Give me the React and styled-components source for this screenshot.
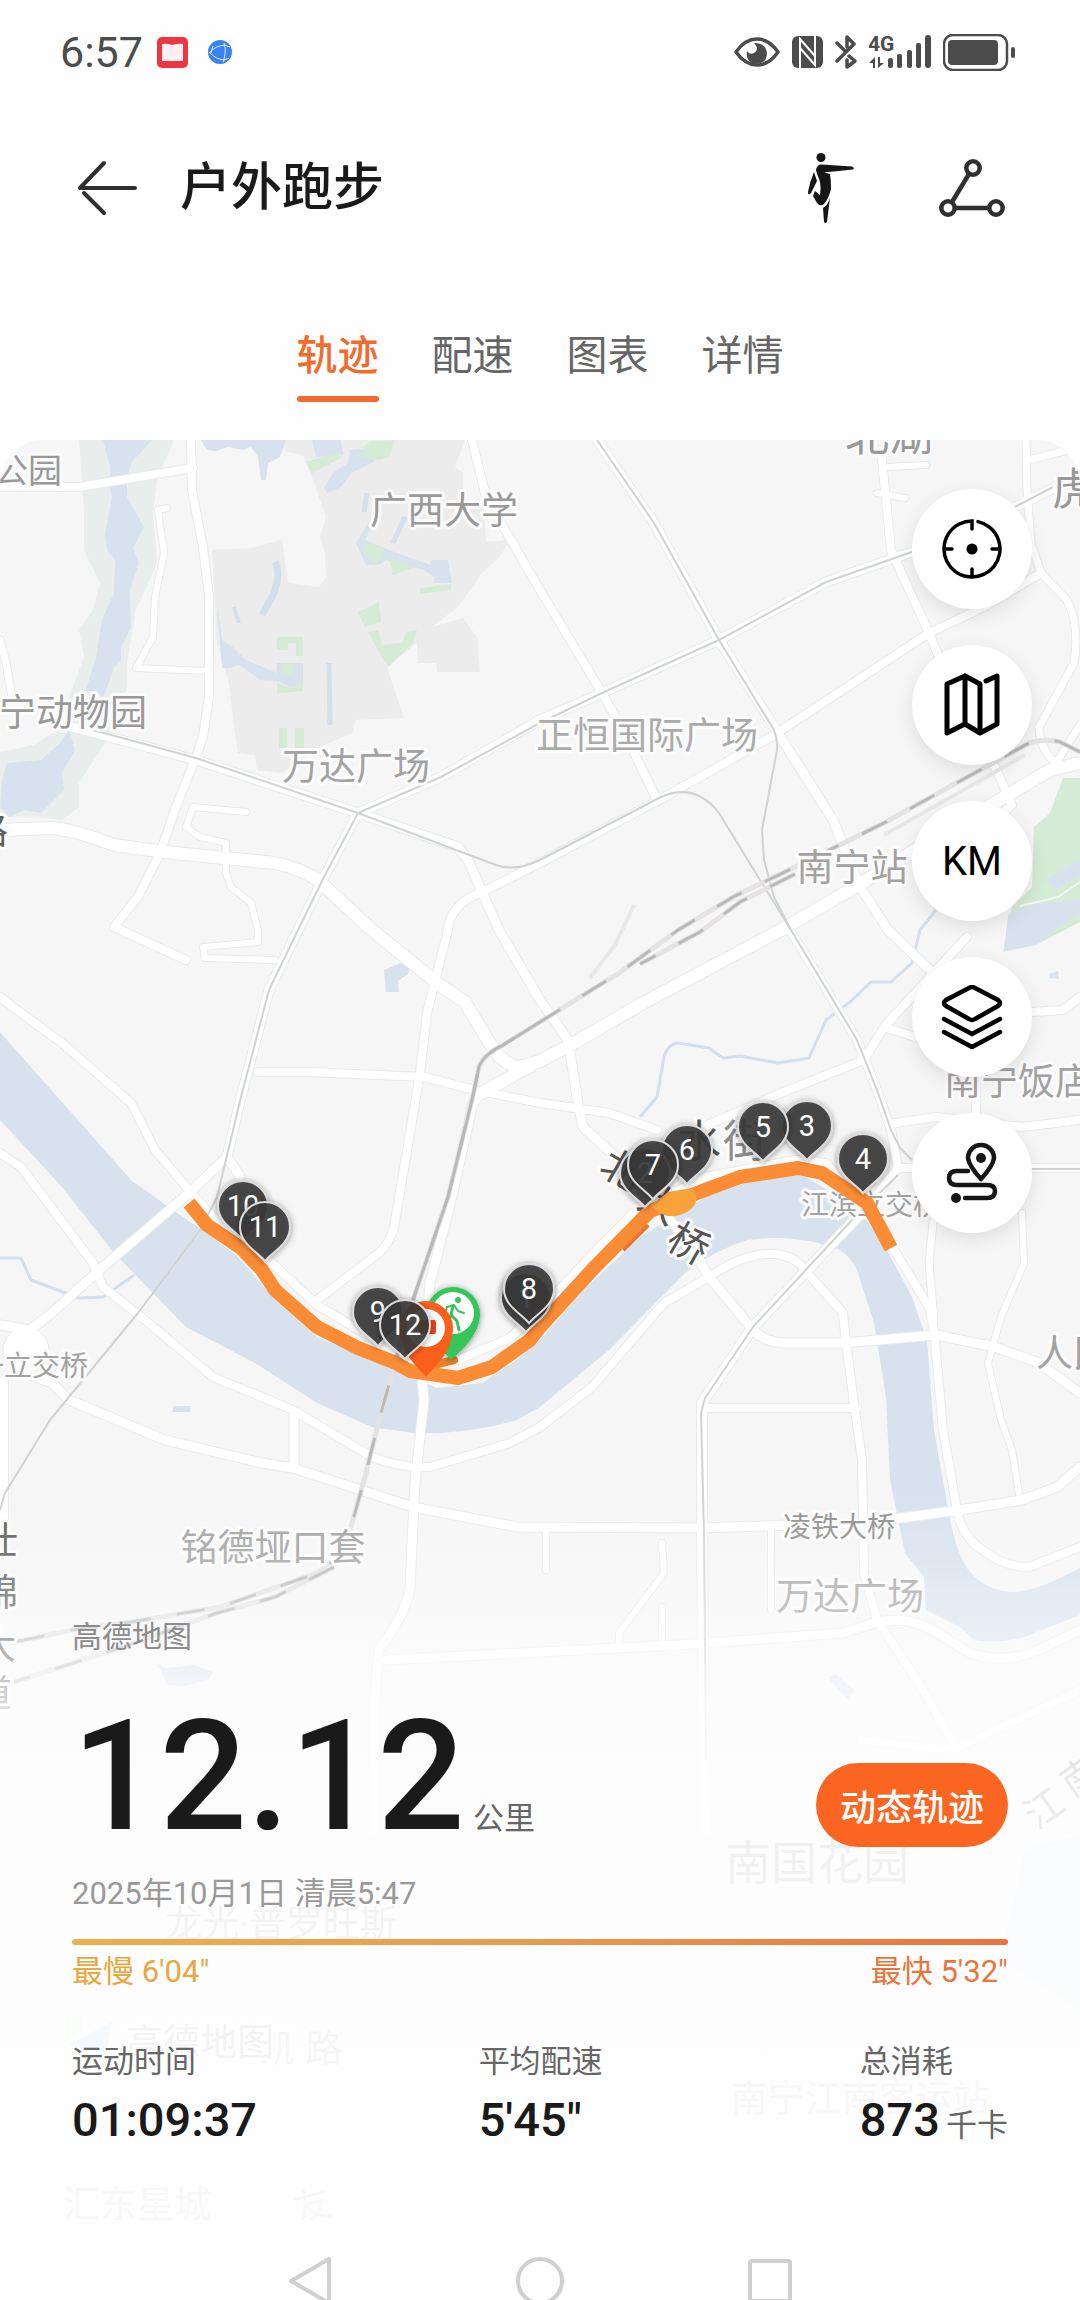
import React, { useState } from 'react'
import styled, { createGlobalStyle, css } from 'styled-components';

const GlobalStyle = createGlobalStyle`
  * {
    box-sizing: border-box;
  }
  body {
    margin: 0;
    background: #fefefe;
    font-family: Roboto, "Noto Sans CJK SC", sans-serif;
    color: #1a1a1a;
  }
  button {
    padding: 0;
    border: none;
    background: none;
    font-family: inherit;
    color: inherit;
    cursor: pointer;
  }
  svg {
    display: block;
    flex: none;
  }
`

const Screen = styled.div`
  display: flex;
  flex-direction: column;
  height: 100vh;
  overflow: hidden;
`;

const StatusBar = styled.div`
  display: flex;
  flex: none;
  justify-content: space-between;
  align-items: center;
  height: 104px;
  padding: 0 65px 0 60px;
  color: #4c4c4c;
`;

const StatusGroup = styled.div`
  display: flex;
  align-items: center;
  gap: ${({ $gap }) => $gap}px;
`;

const Clock = styled.span`
  font-size: 43px;
  line-height: 48px;
`;

const Header = styled.header`
  display: flex;
  flex: none;
  align-items: center;
  height: 168px;
  padding: 0 75px 0 76px;
`;

const IconButton = styled.button`
  display: flex;
  align-items: center;
`;

const Title = styled.h1`
  flex: 1;
  margin: 0 0 0 42px;
  font-size: 51px;
  line-height: 60px;
  font-weight: 500;
`;

const HeaderActions = styled.div`
  display: flex;
  align-items: center;
  gap: 84px;
`;

const Tabs = styled.nav`
  display: flex;
  flex: none;
  justify-content: center;
  gap: 53px;
  height: 168px;
  padding-top: 56px;
`;

const Tab = styled.button`
  position: relative;
  height: 74px;
  padding-bottom: 18px;
  font-size: 41px;
  line-height: 56px;
  color: #666;
  ${({ $active }) => $active && css`
    color: #f26b2c;
    font-weight: 500;
    &::after {
      content: "";
      position: absolute;
      left: 0;
      right: 0;
      bottom: 0;
      height: 6px;
      border-radius: 3px;
      background: #f26b2c;
    }
  `}
`;

const MapSection = styled.main`
  position: relative;
  display: flex;
  flex-direction: column;
  flex: none;
  padding: 49px 0 72px;
  border-radius: 44px 44px 0 0;
  overflow: hidden;
`;

const MapCanvas = styled.svg`
  position: absolute;
  top: 0;
  left: 0;
  width: 100%;
  height: 100%;
`;

const Tools = styled.div`
  position: relative;
  display: flex;
  flex-direction: column;
  align-self: flex-end;
  gap: 36px;
  margin-right: 48px;
`;

const ToolButton = styled.button`
  display: flex;
  justify-content: center;
  align-items: center;
  width: 120px;
  height: 120px;
  border-radius: 50%;
  background: white;
  box-shadow: 0 6px 18px rgba(0, 0, 0, 0.1);
  color: black;
  font-size: 40px;
`;

const Panel = styled.section`
  position: relative;
  margin-top: 384px;
  padding: 0 72px;
`;

const Credit = styled.div`
  font-size: 30px;
  line-height: 40px;
  color: #8c8c8c;
`;

const DistanceRow = styled.div`
  display: flex;
  justify-content: space-between;
  align-items: flex-end;
  margin-top: 50px;
`;

const Distance = styled.div`
  display: flex;
  align-items: baseline;
  gap: 8px;
  font-size: 154px;
  line-height: 140px;
  font-weight: 500;
`;

const Unit = styled.span`
  font-size: 31px;
  line-height: 40px;
  font-weight: 400;
  color: #666;
`;

const PlayButton = styled.button`
  height: 84px;
  padding: 0 24px;
  border-radius: 42px;
  background: #fb6522;
  color: white;
  font-size: 36px;
  font-weight: 500;
`;

const DateLine = styled.div`
  margin-top: 27px;
  font-size: 31px;
  line-height: 40px;
  color: #999;
`;

const PaceBar = styled.div`
  height: 6px;
  margin-top: 25px;
  border-radius: 3px;
  background: linear-gradient(90deg, #ecb04c, #e99a4e 50%, #e8733f);
`;

const PaceLabels = styled.div`
  display: flex;
  justify-content: space-between;
  margin-top: 7px;
  font-size: 31px;
  line-height: 40px;
`;

const PaceLabel = styled.span`
  color: ${({ $fast }) => ($fast ? '#e8763c' : '#eaa63f')};
`;

const Stats = styled.dl`
  display: grid;
  grid-template-columns: 16fr 15fr auto;
  margin: 50px 0 0;
`;

const StatLabel = styled.dt`
  font-size: 31px;
  line-height: 40px;
  color: #666;
`;

const StatValue = styled.dd`
  display: flex;
  align-items: baseline;
  gap: 6px;
  margin: 10px 0 0;
  font-size: 47px;
  line-height: 56px;
  font-weight: 500;
`;

const SystemNav = styled.nav`
  display: flex;
  flex: none;
  justify-content: center;
  align-items: center;
  gap: 182px;
  height: 122px;
  color: #d0d0d0;
`;

const MapText = styled.text`
  font-size: ${({ $size }) => $size || 37}px;
  fill: ${({ $fill }) => $fill || '#a2a2a2'};
  stroke: #fbfbfb;
  stroke-width: 6px;
  stroke-linejoin: round;
  paint-order: stroke;
  text-anchor: ${({ $anchor }) => $anchor || 'middle'};
`;

const PinText = styled.text`
  font-size: 29px;
  fill: white;
  text-anchor: middle;
`;

const RIVER = 'M0 1032 L131 1180 L170 1208 L207 1233 L238 1257 L275 1300 L317 1337 L389 1367 L437 1388 L482 1383 L517 1360 L540 1340 L581 1293 L640 1237 L705 1197 L760 1178 L802 1175 L833 1193 L871 1220 L912 1297 L927 1340 L934 1430 L950 1520 Q958 1558 970 1572 Q988 1592 1015 1592 Q1035 1592 1080 1568 V1615 L1022 1638 Q990 1644 974 1640 L960 1627 L926 1610 L924 1577 L905 1553 L890 1480 L886 1397 L874 1323 L857 1270 Q848 1252 833 1247 Q791 1234 747 1240 Q715 1250 685 1273 L609 1350 L540 1407 L517 1420 Q465 1435 413 1433 L372 1427 L317 1403 L255 1363 L186 1327 L114 1253 L62 1187 L0 1120Z';

const GREY_AREAS = [
    'M281 440 H465 L455 467 L463 473 V497 L484 507 L486 542 L510 540 L499 558 L482 573 L458 607 L432 627 L463 618 L477 637 L480 672 H437 L436 663 H418 L417 643 L387 667 L404 718 L355 720 L353 733 L324 745 L282 773 L257 770 L255 755 L238 753 L234 727 L229 683 L217 643 L212 550 L251 548 L282 540 L288 583 L319 587 L326 577 L325 553 L320 537 L326 517 L313 480 L303 455 L286 452Z',
];

const BANKS = [
    'M79 440 L84 510 L84 550 L100 583 L93 610 L79 630 L84 657 L69 697 L66 725 L34 745 L0 752 V817 L38 817 L62 820 L79 807 V783 L107 740 L114 707 L127 690 V663 L136 610 L157 563 L153 513 L157 480 L174 440Z',
];

const WATER = [
    RIVER,
    'M103 440 L110 467 V490 L112 498 L105 533 L107 550 L115 560 L114 593 L102 620 L96 657 L86 690 L103 697 L110 680 L114 667 L121 660 V647 L131 627 L130 590 L139 563 L133 548 L144 527 L127 497 V480 L131 463 L152 440Z',
    'M69 730 L75 750 L62 773 L64 790 L41 813 L24 810 L9 817 L0 807 L2 780 L7 763 L41 760 L60 743Z',
    'M201 440 H286 L280 457 L268 463 L266 480 H261 L258 457 L251 447 L243 450 L228 447 L216 451 L207 450Z',
    'M312 440 H341 L343 455 L316 457Z',
    'M350 450 L374 448 V462 L351 473 L341 487 L327 493 L324 488 L334 472 L348 463Z',
    'M356 543 L372 517 L374 520 L365 540 L389 550 L430 565 L432 560 H448 L452 583 L434 583 V577 L424 570 L386 560 L379 565 L366 565Z',
    'M217 607 L220 623 L222 640 L234 648 L246 660 L265 668 L277 673 V663 H303 V683 L292 688 L277 681 L260 680 L244 668 L238 665 L231 668 H222Z',
    'M384 970 L401 963 L410 965 L408 974 L398 981 L399 992 H386Z',
    'M174 1406 H190 V1412 H172Z',
    'M158 1665 L166 1668 L195 1665 L213 1672 L208 1680 L185 1686 L168 1685Z',
    'M828 1678 L836 1674 L854 1690 L848 1700Z',
    'M1025 1850 L1080 1835 V2010 L1040 1985 L1000 1960Z',
];

const GREENS = [
    'M306 462 L339 452 L341 458 L312 473Z',
    'M362 448 L370 441 L395 440 L389 457 L379 460 L358 457Z',
    'M365 543 L384 547 L382 560 L374 563 L363 553Z',
    'M389 558 L415 567 L393 575Z',
    'M420 588 L451 584 V590 L420 594Z',
    'M358 612 L379 602 L381 622 L365 627Z',
    'M368 632 L378 630 L382 645 L403 643 L406 632 L417 630 L413 643 L388 667Z',
    'M277 637 H303 V656 H296 V643 H288 V650 H277Z',
    'M277 683 L292 688 L303 683 V691 L277 693Z',
    'M281 664 H296 L292 676 L281 672Z',
    'M279 728 H287 V748 H279Z',
    'M295 728 H304 V748 H295Z',
    'M1080 778 L1063 778 L1050 813 L1034 827 L1032 887 L1012 907 L1003 952 L1036 945 L1080 922Z',
];

const CREEKS = [
    { d: 'M640 1117 L657 1097 L664 1057 Q668 1044 678 1043 L709 1048 L723 1058 L740 1056 L778 1063 L809 1058 L826 1020 L850 1002 L871 982 L891 982 L912 963 L920 930 L936 910', w: 3 },
    { d: 'M0 1258 H21 L31 1280 L79 1298 L103 1297 L134 1275', w: 3 },
    { d: 'M275 562 Q281 573 274 593 L262 615', w: 7 },
    { d: 'M234 607 L239 623', w: 4 },
    { d: 'M329 663 L330 725', w: 5 },
    { d: 'M405 517 L393 543', w: 5 },
    { d: 'M367 493 L364 512', w: 5 },
];

// d: centre line, w: road width without its casing
const ROADS = [
    { d: 'M191 440 L192 490 L203 547 L209 597 V697 L203 737 L196 757 L176 807 L160 853 L138 897 L114 927 L186 960', w: 8 },
    { d: 'M0 487 H79 L193 468', w: 8 },
    { d: 'M167 508 L158 510 L164 553 L155 597 L153 637 L136 668 L207 671', w: 6 },
    { d: 'M0 640 L6 663 L12 697', w: 7 },
    { d: 'M193 807 L246 812 M193 807 L186 827 L200 837 L226 843 V873 L231 887 L251 903 L258 930 V942 L203 947 L205 958 L275 960', w: 6 },
    { d: 'M0 997 L21 1013 L62 1043 L131 1103 L155 1150 L189 1190 L213 1217 L272 1263 L317 1305 L396 1352 L458 1360 L510 1338 L540 1310 L592 1255 L633 1213 L705 1177 L795 1160 L826 1163 L888 1240 L929 1307 L934 1330 L943 1430 L957 1510 Q962 1538 985 1552 Q1005 1567 1029 1567 L1080 1547', w: 8 },
    { d: 'M72 727 L196 760 L358 813 L458 847 L468 860 L499 930 L540 1000 L568 1040 L578 1103 L583 1127 L619 1160', w: 9 },
    { d: 'M540 863 L482 892 Q450 904 448 930 L427 1013 L420 1073 L406 1157 L394 1227 Q390 1243 379 1253 L317 1300 M540 863 L661 799 L771 737 L929 633 L984 607 L1041 573', w: 8 },
    { d: 'M1080 475 L1015 507 L912 552 L826 582 L719 640 L602 693 L540 720 L441 777 L358 813 L324 877 L298 930 L269 990 L241 1097 L227 1157 L189 1193 L96 1273 L52 1313 L30 1330 L0 1325', w: 9 },
    { d: 'M227 1157 L240 1176', w: 9 },
    { d: 'M597 440 L654 523 L719 640 L778 733 L833 820 L860 887 L888 930 L933 973', w: 9 },
    { d: 'M472 440 L486 497 L540 590 L602 693 L623 730 L657 800', w: 8 },
    { d: 'M881 450 L891 550 L929 633 L939 657 L998 773 L1012 805 L1000 815', w: 8 },
    { d: 'M888 467 L926 465 M877 493 L905 498', w: 6 },
    { d: 'M1026 440 L1027 490 L1031 543 L1041 573 L1067 600 Q1080 625 1074 663 L1039 727 Q1040 750 1056 763 L1080 725 M1029 460 L1080 447', w: 7 },
    { d: 'M258 1072 H310 L424 1077 L475 1090 L540 1103 L609 1113 L657 1130', w: 8 },
    { d: 'M0 1153 L21 1167 L93 1263 L103 1287 L145 1320 L213 1377 L293 1410 L372 1457 Q400 1468 430 1467 L510 1443 L540 1427 L592 1387 L664 1303 L709 1277 Q745 1252 775 1254 Q795 1256 805 1270 L843 1313 L846 1343 L855 1410 L862 1460 L864 1573 L877 1620 L919 1683 L953 1743', w: 8 },
    { d: 'M30 1375 L52 1383 L69 1400 L165 1440 L262 1463 L293 1468 L413 1507 L517 1527 L698 1528 L864 1523 L960 1510 L1022 1500 L1057 1487 L1080 1467 M294 1414 V1463', w: 9 },
    { d: 'M4 1380 V1540', w: 8 },
    { d: 'M866 1208 L753 1327 L702 1403 V1533 L705 1833', w: 10 },
    { d: 'M688 1240 L709 1277 L726 1297 L753 1330 Q765 1343 788 1343 H843 L936 1335 L995 1347 L1039 1363 L1080 1393 M688 1240 L662 1212', w: 9 },
    { d: 'M709 1408 H857', w: 8 },
    { d: 'M1022 1213 L1024 1263 L1001 1317 L988 1363 L1001 1420 L1012 1450 L1020 1500', w: 6 },
    { d: 'M933 1223 L929 1263 L934 1320', w: 7 },
    { d: 'M701 1128 L781 1093 L864 1060 L884 1027 L967 937 M884 1027 L915 1037', w: 8 },
    { d: 'M790 930 L857 1040 L877 1090 L891 1130 L898 1168 L866 1208 M895 1123 L936 1117 L1022 1127 L1080 1120 M898 1168 H1080 M1032 1012 L1063 1010 L1080 997 M976 1090 V1120', w: 8 },
    { d: 'M386 1660 L540 1652 L678 1645 L843 1633 L874 1623 Q905 1615 933 1630 L970 1653 Q1005 1665 1039 1650 L1080 1630', w: 9 },
    { d: 'M771 1530 V1610 M662 1543 L664 1573 L619 1633 V1645 M662 1607 V1640 M546 1530 V1570', w: 6 },
    { d: 'M860 1740 L953 1750 L1080 1690', w: 8 },
    { d: 'M482 1093 Q472 1100 470 1117 L448 1213 L430 1283 L422 1380 L424 1400 L415 1483 L410 1587 Q408 1610 379 1650 L375 1700 V1833', w: 9 },
    { d: 'M0 830 L52 828 Q75 830 114 845 L165 852 L275 863 Q305 870 320 882 L372 930 L437 983 L465 1002 L492 1047 Q505 1066 520 1067 L540 1061 L574 1043 L643 1003 L781 930 L850 890 L915 850 L988 807 L1050 770 L1080 763 M482 1093 L530 1066', w: 12 },
];

const SUBWAYS = [
    'M93 730 L196 758 L358 813 L496 865 Q515 872 540 860 L661 797 Q695 782 719 813 L760 880 L791 930 L857 1040 L877 1090 L891 1130 L900 1148 L912 1160',
    'M1053 487 L1015 507 L912 552 L826 582 L719 640 L602 693 L540 723 L441 777 L358 813 L324 877 L298 930 L269 990 L241 1097 L217 1197 L200 1230 L138 1313 L50 1420 L5 1493 L0 1510',
    'M597 440 L654 523 L719 640 L774 730 Q778 742 777 750 L762 830 L764 860 L774 897 L791 930',
    'M898 1175 L852 1220 L753 1327 L705 1398 L701 1413 L704 1533 L706 1760',
    'M1030 1169 H1080',
];

const RAILS = [
    'M1080 752 L1060 742 Q1045 738 1029 743 L884 823 L795 867 L733 897 L678 930 L619 973 L540 1022 L503 1045 Q483 1055 479 1067 L472 1100 L448 1197 L413 1300 L379 1420 L365 1477 L351 1527 Q345 1552 334 1560 Q320 1573 306 1577 L220 1607 L131 1622 L72 1630 L10 1643',
    'M334 1567 L275 1597 L217 1613 L114 1650 L14 1682',
    'M795 874 L740 902 L700 932 L640 964',
];

const SIDINGS = [
    'M1025 755 L884 835',
    'M634 905 L615 945 L590 978',
];

const ROUTE = 'M189 1203 L207 1225 L241 1248 L262 1270 L275 1290 L317 1327 L358 1348 L396 1363 L410 1371 L458 1378 L492 1367 L530 1340 L540 1327 L592 1270 L650 1211 L705 1190 L740 1177 L798 1168 L822 1173 L867 1203 L891 1248';

const LABELS = [
    { text: '公园', x: 62, y: 470, size: 34, anchor: 'end', fill: '#999' },
    { text: '南宁动物园', x: 147, y: 712, anchor: 'end', fill: '#999' },
    { text: '广西大学', x: 444, y: 510, fill: '#999' },
    { text: '万达广场', x: 356, y: 766 },
    { text: '正恒国际广场', x: 647, y: 735, fill: '#ababab' },
    { text: '路', x: 8, y: 830, anchor: 'end', fill: '#5c5c5c' },
    { text: '北湖', x: 889, y: 435, size: 44, fill: '#999' },
    { text: '虎', x: 1052, y: 489, size: 44, anchor: 'start', fill: '#999' },
    { text: '南宁站', x: 852, y: 867 },
    { text: '南宁饭店', x: 944, y: 1081, anchor: 'start' },
    { text: '水', x: 699, y: 1141, size: 44, fill: '#555' },
    { text: '街', x: 745, y: 1141, size: 44, fill: '#8c8c8c' },
    { text: '江滨立交桥', x: 801, y: 1205, size: 28, anchor: 'start' },
    { text: '人民', x: 1036, y: 1353, anchor: 'start' },
    { text: '一立交桥', x: 88, y: 1366, size: 28, anchor: 'end' },
    { text: '凌铁大桥', x: 839, y: 1527, size: 28, fill: '#8f8f8f' },
    { text: '万达广场', x: 850, y: 1596 },
    { text: '铭德垭口套', x: 273, y: 1547 },
    { text: '壮', x: 18, y: 1540, anchor: 'end', fill: '#5c5c5c' },
    { text: '锦', x: 18, y: 1592, anchor: 'end', fill: '#5c5c5c' },
    { text: '大', x: 16, y: 1645, anchor: 'end', fill: '#5c5c5c' },
    { text: '道', x: 12, y: 1693, anchor: 'end', fill: '#5c5c5c' },
    { text: '北', x: 622, y: 1169, size: 40, fill: '#555', rotate: 30 },
    { text: '大', x: 660, y: 1203, size: 40, fill: '#555', rotate: 30 },
    { text: '桥', x: 689, y: 1243, size: 40, fill: '#555', rotate: 30 },
    { text: '江', x: 1044, y: 1808, size: 38, fill: '#555', rotate: -35 },
    { text: '南', x: 1080, y: 1776, size: 38, fill: '#555', rotate: -35 },
    { text: '南国花园', x: 817, y: 1862, size: 46, fill: '#777' },
    { text: '龙光·普罗旺斯', x: 281, y: 1923, fill: '#777' },
    { text: '凯', x: 276, y: 2048, fill: '#666' },
    { text: '路', x: 324, y: 2048, fill: '#555' },
    { text: '高德地图', x: 200, y: 2042, fill: '#333' },
    { text: '南宁江南客运站', x: 860, y: 2098, fill: '#777' },
    { text: '汇东星城', x: 137, y: 2204, fill: '#444' },
    { text: '友', x: 312, y: 2205, fill: '#444', rotate: -15 },
];

const PIN = 'M0 0 C-7 -9 -25 -17 -25 -34 A25 25 0 1 1 25 -34 C25 -17 7 -9 0 0Z';

const PINS_WEST = [
    { n: 10, x: 243, y: 1240 },
    { n: 11, x: 265, y: 1261 },
    { n: 9, x: 378, y: 1346 },
];

const PINS_EAST = [
    { n: 12, x: 405, y: 1359 },
    { n: 1, x: 526, y: 1332 },
    { n: 8, x: 529, y: 1323 },
    { n: 6, x: 687, y: 1184 },
    { n: 2, x: 645, y: 1207 },
    { n: 7, x: 653, y: 1199 },
    { n: 3, x: 807, y: 1160 },
    { n: 5, x: 763, y: 1161 },
    { n: 4, x: 863, y: 1193 },
];

const KmPin = ({ n, x, y }) => (
    <g transform={`translate(${x} ${y})`}>
        <path d={PIN} fill="#3a3a3a" fillOpacity="0.88" stroke="#dcdcdc" strokeWidth="2" filter="url(#pinShadow)" />
        <PinText x="0" y="-24">{n}</PinText>
    </g>
);

const TrackMap = () => (
    <MapCanvas viewBox="0 440 1080 1780" preserveAspectRatio="xMidYMin slice" role="img" aria-label="跑步轨迹地图">
        <defs>
            <linearGradient id="fade" gradientUnits="userSpaceOnUse" x1="0" y1="1490" x2="0" y2="2220">
                <stop offset="0" stopColor="#fefefe" stopOpacity="0" />
                <stop offset="0.1" stopColor="#fefefe" stopOpacity="0.2" />
                <stop offset="0.2" stopColor="#fefefe" stopOpacity="0.48" />
                <stop offset="0.3" stopColor="#fefefe" stopOpacity="0.78" />
                <stop offset="0.4" stopColor="#fefefe" stopOpacity="0.88" />
                <stop offset="0.7" stopColor="#fefefe" stopOpacity="0.94" />
                <stop offset="1" stopColor="#fefefe" stopOpacity="0.97" />
            </linearGradient>
            <filter id="pinShadow" x="-30%" y="-30%" width="160%" height="160%">
                <feDropShadow dx="0" dy="1" stdDeviation="3" floodOpacity="0.45" />
            </filter>
        </defs>
        <rect y="440" width="1080" height="1780" fill="#f7f6f7" />
        {BANKS.map((d) => <path key={d} d={d} fill="#e9eeed" />)}
        {GREY_AREAS.map((d) => <path key={d} d={d} fill="#ebeceb" />)}
        {WATER.map((d) => <path key={d} d={d} fill="#d7e2ee" />)}
        {GREENS.map((d) => <path key={d} d={d} fill="#d5ebd6" />)}
        <path d="M1045 880 L1080 860 V875 L1055 890Z M1008 915 L1030 905 L1080 900 V912 L1036 945 L1004 950Z" fill="#d7e2ee" />
        <path d="M1020 906 L1058 897 L1080 882" fill="none" stroke="#f3f6f3" strokeWidth="2" />
        <path d="M1050 974 L1058 971 L1059 979 L1049 978Z" fill="#d7e2ee" />
        <g fill="none" stroke="#d3dfec" strokeLinejoin="round">
            {CREEKS.map(({ d, w }) => <path key={d} d={d} strokeWidth={w} />)}
        </g>
        <g fill="none" stroke="#e7eae9" strokeLinejoin="round" strokeLinecap="round">
            {ROADS.map(({ d, w }) => <path key={d} d={d} strokeWidth={w + 2} />)}
        </g>
        <circle cx="26" cy="1350" r="23" fill="#fff" stroke="#e7eae9" />
        <g fill="none" stroke="#fff" strokeLinejoin="round" strokeLinecap="round">
            {ROADS.map(({ d, w }) => <path key={d} d={d} strokeWidth={w} />)}
        </g>
        <g fill="none" stroke="#cfd3d2" strokeWidth="2" strokeLinejoin="round">
            {SUBWAYS.map((d) => <path key={d} d={d} />)}
        </g>
        <g fill="none" stroke="#e4e2e3" strokeWidth="5">
            {RAILS.map((d) => <path key={d} d={d} />)}
        </g>
        <g fill="none" stroke="#e9e8e9" strokeWidth="4">
            {SIDINGS.map((d) => <path key={d} d={d} />)}
        </g>
        <g fill="none" stroke="#bab9ba" strokeWidth="3" strokeDasharray="28 26">
            {RAILS.map((d) => <path key={d} d={d} />)}
        </g>
        <path d="M540 1022 L503 1045 Q483 1055 479 1067 L472 1100 L448 1197 L413 1300" fill="none" stroke="#bab9ba" strokeWidth="3" />
        {LABELS.map(({ text, x, y, size = 37, anchor, fill, rotate = 0 }) => (
            <MapText
                key={`${text}${x}`}
                x={x}
                y={y + Math.round(size * 0.37)}
                transform={`rotate(${rotate} ${x} ${y})`}
                $size={size}
                $anchor={anchor}
                $fill={fill}
            >
                {text}
            </MapText>
        ))}
        <path d="M69 2045 L112 2022 L106 2054Z" fill="#5aa5f5" />
        <path d="M65 2016 H82 V2030 L65 2042Z" fill="#bdeabd" />
        <rect y="1490" width="1080" height="730" fill="url(#fade)" />
        <path d="M430 1366 L454 1360" stroke="#e8812c" strokeWidth="8" strokeLinecap="round" />
        <path d="M620 1247 L645 1222" stroke="#e9723a" strokeWidth="13" />
        <path d={ROUTE} fill="none" stroke="#fa8c36" strokeWidth="14" strokeLinejoin="round" />
        <path d="M650 1206 L668 1192 L692 1188 Q702 1199 690 1210 Q676 1219 664 1215Z" fill="#f9a23a" />
        {PINS_WEST.map((pin) => <KmPin key={pin.n} {...pin} />)}
        <g transform="translate(450 1359)">
            <path d="M0 0 C-6 -8 -24 -20 -24 -45 A27 27 0 0 1 30 -45 C30 -26 12 -8 5 -3 Q2 0 0 0Z" fill="#36c558" filter="url(#pinShadow)" />
            <circle cx="3" cy="-46" r="21" fill="#fff" />
            <circle cx="8" cy="-59" r="3" fill="#36c558" />
            <path d="M-5 -45 L-3 -52 L4 -54 L8 -48 L14 -46" fill="none" stroke="#36c558" strokeWidth="2" strokeLinecap="round" strokeLinejoin="round" />
            <path d="M3 -53 L1 -44 L7 -38 L9 -29 M1 -44 L-2 -38 L-9 -36" fill="none" stroke="#36c558" strokeWidth="3" strokeLinecap="round" strokeLinejoin="round" />
        </g>
        <g transform="translate(426 1377)">
            <path d="M0 0 C-6 -8 -27 -24 -27 -49 A27 27 0 0 1 27 -49 C27 -24 6 -8 0 0Z" fill="#fb5f1c" />
            <circle cx="0" cy="-49" r="19" fill="#fff" />
            <rect x="-8" y="-57" width="18" height="14" rx="2" fill="#f0441a" />
        </g>
        {PINS_EAST.map((pin) => <KmPin key={pin.n} {...pin} />)}
    </MapCanvas>
);

const StatusIcons = () => (
    <StatusGroup $gap={12}>
        <svg width="46" height="32" viewBox="0 0 46 32" fill="none">
            <path d="M2 16 Q11 3 23 3 Q35 3 44 16 Q35 29 23 29 Q11 29 2 16Z" stroke="currentColor" strokeWidth="3.5" strokeLinejoin="round" />
            <path d="M20 7 Q26 13 20 17 Q15 19 13 15 Q11 27 23 28 Q33 27 33 17 Q32 7 20 7Z" fill="currentColor" />
        </svg>
        <svg width="31" height="32" viewBox="0 0 31 32">
            <rect width="31" height="32" rx="6" fill="currentColor" />
            <path d="M8 33 V3 L23 20 M23 -1 V29 L8 12" fill="none" stroke="#fefefe" strokeWidth="2" />
        </svg>
        <svg width="22" height="34" viewBox="0 0 22 34" fill="none" stroke="currentColor" strokeWidth="3.5" strokeLinejoin="round" strokeLinecap="round">
            <path d="M2 8 L10 16 M12 12 V2 L19 9 L2 26 M14 21 L20 26 L12 32 V25" />
        </svg>
        <svg width="62" height="34" viewBox="0 0 62 34" fill="currentColor">
            <text x="-1" y="16" fontSize="21" fontWeight="700">4G</text>
            <path d="M6 33 V22 L0 28 H4 V33Z M9 22 H11 V28 H15 L9 33Z" />
            <rect x="19" y="23" width="5" height="10" rx="2" />
            <rect x="28" y="19" width="5" height="14" rx="2" />
            <rect x="38" y="15" width="5" height="18" rx="2" />
            <rect x="47" y="8" width="5" height="25" rx="2" />
            <rect x="56" y="0" width="6" height="33" rx="3" />
        </svg>
        <svg width="72" height="37" viewBox="0 0 72 37" fill="none">
            <rect x="1" y="1" width="63" height="35" rx="9" stroke="currentColor" strokeWidth="2.5" />
            <rect x="5" y="6" width="50" height="25" rx="4" fill="currentColor" />
            <rect x="68" y="13" width="4" height="11" rx="2" fill="currentColor" />
        </svg>
    </StatusGroup>
);

const NotificationIcons = () => (
    <StatusGroup $gap={20}>
        <svg width="31" height="31" viewBox="0 0 31 31">
            <rect width="31" height="31" rx="5" fill="#ee3540" />
            <path d="M5 7 Q10 6 15 8 Q21 6 26 7 V24 H5Z" fill="#fff0ef" />
        </svg>
        <svg width="24" height="24" viewBox="0 0 24 24" fill="none" stroke="#dcecff" strokeWidth="1">
            <circle cx="12" cy="12" r="12" fill="#3a83ee" stroke="none" />
            <path d="M1 13 Q8 5 18 5 M2 13 Q9 20 17 20 M16 3 Q19 12 15 22 M5 6 L3 13 M16 5 L22 7 M16 20 L21 18" />
        </svg>
    </StatusGroup>
);

const ArrowIcon = () => (
    <svg width="62" height="56" viewBox="0 0 62 56" fill="none" stroke="#2f2f2f" strokeWidth="4" strokeLinecap="round" strokeLinejoin="round">
        <path d="M28 3 L4 28 H59 M8 33 L28 53" />
    </svg>
);

const StretchIcon = () => (
    <svg width="47" height="70" viewBox="0 0 47 70" fill="#161616">
        <circle cx="13" cy="4.5" r="4.5" />
        <path d="M8 17 Q9 11 14 11.5 L44 13.5 Q47 15 45 16.5 L16 19.5 L22 21 Q23 27 23 36 Q21 45 16 51 Q12 54 9 50 L5 43 L7 38 L12 42 Q14 30 9 21Z" />
        <path d="M6 19 L9 28 L3 40 Q0 43 0 39 Q2 28 6 19Z" />
        <path d="M22 45 L19 69 Q17 71 16 69 L15 55 Q20 52 22 45Z" />
    </svg>
);

const RouteShareIcon = () => (
    <svg width="66" height="58" viewBox="0 0 66 58" fill="none" stroke="#2f2f2f" strokeWidth="4.5">
        <circle cx="34" cy="9" r="6.7" />
        <circle cx="9" cy="49" r="6.7" />
        <circle cx="57" cy="49" r="6.7" />
        <path d="M30 15 L13 43 M16 49 H50" />
    </svg>
);

const TargetIcon = () => (
    <svg width="60" height="60" viewBox="0 0 60 60" fill="none" stroke="currentColor" strokeWidth="3.5" strokeLinecap="round">
        <path d="M36 2.65 A28 28 0 1 1 30 2 V10 M2 30 H10 M50 30 H58 M30 50 V58" />
        <circle cx="30" cy="30" r="5.5" fill="currentColor" stroke="none" />
    </svg>
);

const FoldedMapIcon = () => (
    <svg width="58" height="64" viewBox="0 0 58 64" fill="none" stroke="currentColor" strokeWidth="5" strokeLinecap="round" strokeLinejoin="round">
        <path d="M22 3 L4 11 V60 L22 51 L37 60 L54 51 V3 L43 8 M22 3 V51 M22 3 L37 11 V60" />
    </svg>
);

const LayersIcon = () => (
    <svg width="62" height="64" viewBox="0 0 62 64" fill="none" stroke="currentColor" strokeWidth="4.5" strokeLinecap="round" strokeLinejoin="round">
        <path d="M28 3 Q31 1 34 3 L57 15 Q61 18 57 21 L34 34 Q31 36 28 34 L5 21 Q1 18 5 15Z M3 34 L31 49 L59 34 M3 47 L31 62 L59 47" />
    </svg>
);

const PathIcon = () => (
    <svg width="52" height="62" viewBox="0 0 52 62" fill="none" stroke="#161616" strokeWidth="4.5" strokeLinecap="round" strokeLinejoin="round">
        <path d="M35 37 Q23 24 22 16 A13 13 0 0 1 48 16 Q47 24 35 37Z" />
        <circle cx="35" cy="16" r="5" fill="#161616" stroke="none" />
        <path d="M22 29 H11 Q3 29 3 36 Q3 43 11 43 H41 Q49 43 49 49 Q49 56 41 56 H19" />
        <circle cx="10" cy="56" r="5" fill="#161616" stroke="none" />
    </svg>
);

const TABS = ['轨迹', '配速', '图表', '详情'];

const App = () => {
    const [tab, setTab] = useState(TABS[0]);
    return (
        <Screen>
            <GlobalStyle />
            <StatusBar>
                <StatusGroup $gap={14}>
                    <Clock>6:57</Clock>
                    <NotificationIcons />
                </StatusGroup>
                <StatusIcons />
            </StatusBar>
            <Header>
                <IconButton aria-label="返回"><ArrowIcon /></IconButton>
                <Title>户外跑步</Title>
                <HeaderActions>
                    <IconButton aria-label="拉伸"><StretchIcon /></IconButton>
                    <IconButton aria-label="分享"><RouteShareIcon /></IconButton>
                </HeaderActions>
            </Header>
            <Tabs>
                {TABS.map((name) => (
                    <Tab key={name} $active={name === tab} onClick={() => setTab(name)}>{name}</Tab>
                ))}
            </Tabs>
            <MapSection>
                <TrackMap />
                <Tools>
                    <ToolButton aria-label="定位"><TargetIcon /></ToolButton>
                    <ToolButton aria-label="地图"><FoldedMapIcon /></ToolButton>
                    <ToolButton>KM</ToolButton>
                    <ToolButton aria-label="图层"><LayersIcon /></ToolButton>
                    <ToolButton aria-label="路线"><PathIcon /></ToolButton>
                </Tools>
                <Panel>
                    <Credit>高德地图</Credit>
                    <DistanceRow>
                        <Distance>12.12<Unit>公里</Unit></Distance>
                        <PlayButton>动态轨迹</PlayButton>
                    </DistanceRow>
                    <DateLine>2025年10月1日 清晨5:47</DateLine>
                    <PaceBar />
                    <PaceLabels>
                        <PaceLabel>最慢 6'04"</PaceLabel>
                        <PaceLabel $fast>最快 5'32"</PaceLabel>
                    </PaceLabels>
                    <Stats>
                        <div>
                            <StatLabel>运动时间</StatLabel>
                            <StatValue>01:09:37</StatValue>
                        </div>
                        <div>
                            <StatLabel>平均配速</StatLabel>
                            <StatValue>5'45"</StatValue>
                        </div>
                        <div>
                            <StatLabel>总消耗</StatLabel>
                            <StatValue>873<Unit>千卡</Unit></StatValue>
                        </div>
                    </Stats>
                </Panel>
            </MapSection>
            <SystemNav>
                <IconButton aria-label="后退">
                    <svg width="48" height="50" viewBox="0 0 48 50" fill="none" stroke="currentColor" strokeWidth="4" strokeLinejoin="round">
                        <path d="M43 3 V47 L5 25Z" />
                    </svg>
                </IconButton>
                <IconButton aria-label="主页">
                    <svg width="48" height="48" viewBox="0 0 48 48" fill="none" stroke="currentColor" strokeWidth="4">
                        <circle cx="24" cy="24" r="22" />
                    </svg>
                </IconButton>
                <IconButton aria-label="最近任务">
                    <svg width="48" height="48" viewBox="0 0 48 48" fill="none" stroke="currentColor" strokeWidth="4">
                        <rect x="4" y="4" width="40" height="40" rx="2" />
                    </svg>
                </IconButton>
            </SystemNav>
        </Screen>
    )
}

export default App;
